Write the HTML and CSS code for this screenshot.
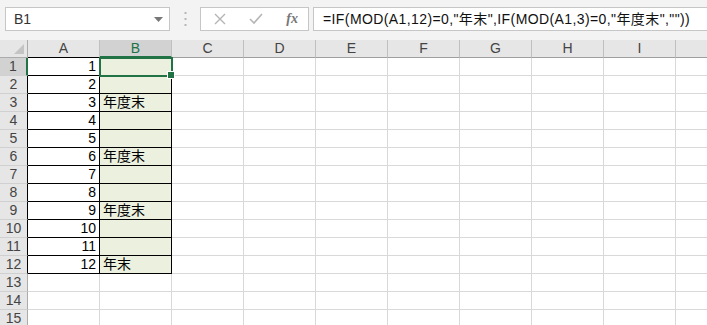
FILE: index.html
```html
<!DOCTYPE html>
<html>
<head>
    <meta charset="utf-8">
    <title>Excel</title>
    <link rel="stylesheet" href="styles.css">
</head>
<body>
    <div class="app">
        <div class="bar">
            <div class="namebox">
                <span class="name">B1</span>
                <svg class="drop" width="9" height="5" viewBox="0 0 9 5"><polygon points="0,0 9,0 4.5,5" fill="#777"/></svg>
            </div>
            <div class="sep">
                <svg width="3" height="14" viewBox="0 0 3 14">
                    <rect x="0.5" y="0" width="2" height="2" fill="#b8b8b8"/>
                    <rect x="0.5" y="6" width="2" height="2" fill="#b8b8b8"/>
                    <rect x="0.5" y="12" width="2" height="2" fill="#b8b8b8"/>
                </svg>
            </div>
            <div class="fnbtns">
                <svg width="12" height="12" viewBox="0 0 12 12"><path d="M1 1 L11 11 M11 1 L1 11" stroke="#b5b5b5" stroke-width="1.4" fill="none"/></svg>
                <svg width="14" height="12" viewBox="0 0 14 12"><path d="M1 6 L5 10 L13 1" stroke="#b5b5b5" stroke-width="1.6" fill="none"/></svg>
                <span class="fx">fx</span>
            </div>
            <div class="formula">=IF(MOD(A1,12)=0,"年末",IF(MOD(A1,3)=0,"年度末",""))</div>
        </div>

        <div class="sheet">
            <div class="hd corner">
                <svg width="10" height="10" viewBox="0 0 10 10"><polygon points="10,0 10,10 0,10" fill="#c4c4c4"/></svg>
            </div>
            <div class="hd col ink">A</div>
            <div class="hd col sel">B</div>
            <div class="hd col">C</div>
            <div class="hd col">D</div>
            <div class="hd col">E</div>
            <div class="hd col">F</div>
            <div class="hd col">G</div>
            <div class="hd col">H</div>
            <div class="hd col">I</div>
            <div class="hd col last"></div>

            <div class="hd row rsel">1</div>
            <div class="c num bx">1</div>
            <div class="c fill bx active"></div>
            <div class="c"></div><div class="c"></div><div class="c"></div><div class="c"></div><div class="c"></div><div class="c"></div><div class="c"></div><div class="c last"></div>

            <div class="hd row ink">2</div>
            <div class="c num bx">2</div>
            <div class="c fill bx"></div>
            <div class="c"></div><div class="c"></div><div class="c"></div><div class="c"></div><div class="c"></div><div class="c"></div><div class="c"></div><div class="c last"></div>

            <div class="hd row ink">3</div>
            <div class="c num bx">3</div>
            <div class="c fill bx">年度末</div>
            <div class="c"></div><div class="c"></div><div class="c"></div><div class="c"></div><div class="c"></div><div class="c"></div><div class="c"></div><div class="c last"></div>

            <div class="hd row ink">4</div>
            <div class="c num bx">4</div>
            <div class="c fill bx"></div>
            <div class="c"></div><div class="c"></div><div class="c"></div><div class="c"></div><div class="c"></div><div class="c"></div><div class="c"></div><div class="c last"></div>

            <div class="hd row ink">5</div>
            <div class="c num bx">5</div>
            <div class="c fill bx"></div>
            <div class="c"></div><div class="c"></div><div class="c"></div><div class="c"></div><div class="c"></div><div class="c"></div><div class="c"></div><div class="c last"></div>

            <div class="hd row ink">6</div>
            <div class="c num bx">6</div>
            <div class="c fill bx">年度末</div>
            <div class="c"></div><div class="c"></div><div class="c"></div><div class="c"></div><div class="c"></div><div class="c"></div><div class="c"></div><div class="c last"></div>

            <div class="hd row ink">7</div>
            <div class="c num bx">7</div>
            <div class="c fill bx"></div>
            <div class="c"></div><div class="c"></div><div class="c"></div><div class="c"></div><div class="c"></div><div class="c"></div><div class="c"></div><div class="c last"></div>

            <div class="hd row ink">8</div>
            <div class="c num bx">8</div>
            <div class="c fill bx"></div>
            <div class="c"></div><div class="c"></div><div class="c"></div><div class="c"></div><div class="c"></div><div class="c"></div><div class="c"></div><div class="c last"></div>

            <div class="hd row ink">9</div>
            <div class="c num bx">9</div>
            <div class="c fill bx">年度末</div>
            <div class="c"></div><div class="c"></div><div class="c"></div><div class="c"></div><div class="c"></div><div class="c"></div><div class="c"></div><div class="c last"></div>

            <div class="hd row ink">10</div>
            <div class="c num bx">10</div>
            <div class="c fill bx"></div>
            <div class="c"></div><div class="c"></div><div class="c"></div><div class="c"></div><div class="c"></div><div class="c"></div><div class="c"></div><div class="c last"></div>

            <div class="hd row ink">11</div>
            <div class="c num bx">11</div>
            <div class="c fill bx"></div>
            <div class="c"></div><div class="c"></div><div class="c"></div><div class="c"></div><div class="c"></div><div class="c"></div><div class="c"></div><div class="c last"></div>

            <div class="hd row ink">12</div>
            <div class="c num bx">12</div>
            <div class="c fill bx">年末</div>
            <div class="c"></div><div class="c"></div><div class="c"></div><div class="c"></div><div class="c"></div><div class="c"></div><div class="c"></div><div class="c last"></div>

            <div class="hd row">13</div>
            <div class="c"></div><div class="c"></div>
            <div class="c"></div><div class="c"></div><div class="c"></div><div class="c"></div><div class="c"></div><div class="c"></div><div class="c"></div><div class="c last"></div>

            <div class="hd row">14</div>
            <div class="c"></div><div class="c"></div>
            <div class="c"></div><div class="c"></div><div class="c"></div><div class="c"></div><div class="c"></div><div class="c"></div><div class="c"></div><div class="c last"></div>

            <div class="hd row">15</div>
            <div class="c"></div><div class="c"></div>
            <div class="c"></div><div class="c"></div><div class="c"></div><div class="c"></div><div class="c"></div><div class="c"></div><div class="c"></div><div class="c last"></div>
        </div>
    </div>
</body>
</html>
```

FILE: styles.css
```css
* {
    margin: 0;
    padding: 0;
    box-sizing: border-box;
}
body {
    width: 707px;
    height: 325px;
    overflow: hidden;
    background: #fff;
    font-family: "Liberation Sans", "Noto Sans CJK JP", sans-serif;
    color: #000;
}
.app {
    display: flex;
    flex-direction: column;
    height: 325px;
    overflow: hidden;
}
.bar {
    height: 40px;
    flex-shrink: 0;
    display: flex;
    align-items: flex-start;
    padding: 7px 0 0 5px;
    background: #f3f3f3;
}
.namebox {
    width: 165px;
    height: 24px;
    display: flex;
    align-items: center;
    justify-content: space-between;
    padding: 0 6px 0 8px;
    background: #fff;
    border: 1px solid #c6c6c6;
}
.name {
    font-size: 14px;
    color: #333;
}
.drop {
    margin-top: 1px;
}
.sep {
    width: 30px;
    height: 24px;
    display: flex;
    align-items: center;
    justify-content: center;
}
.fnbtns {
    width: 109px;
    height: 24px;
    display: flex;
    align-items: center;
    justify-content: space-between;
    padding: 0 10px 0 13px;
    background: #fff;
    border: 1px solid #c6c6c6;
}
.fx {
    font-family: "Liberation Serif", serif;
    font-style: italic;
    font-weight: bold;
    font-size: 14px;
    color: #777;
}
.formula {
    flex: 1;
    height: 24px;
    margin-left: 4px;
    padding-left: 9px;
    background: #fff;
    border: 1px solid #c6c6c6;
    border-right: none;
    font-size: 14px;
    line-height: 22px;
    letter-spacing: 0.4px;
    white-space: nowrap;
    overflow: hidden;
    color: #111;
}
.sheet {
    display: grid;
    grid-template-columns: 28px repeat(9, 72px) 1fr;
    grid-auto-rows: 18px;
}
.hd {
    background: #e6e6e6;
    color: #444;
    font-size: 14px;
    line-height: 17px;
    text-align: center;
}
.corner {
    display: flex;
    align-items: flex-end;
    justify-content: flex-end;
    padding: 0 3px 3px 0;
    border-right: 1px solid #ababab;
    border-bottom: 1px solid #ababab;
}
.col {
    border-right: 1px solid #c0c0c0;
    border-bottom: 1px solid #9f9f9f;
}
.col.ink {
    border-bottom-color: #000;
}
.col.sel {
    background: #d2d2d2;
    color: #217346;
    border-bottom: 2px solid #217346;
}
.row {
    border-right: 1px solid #ababab;
    border-bottom: 1px solid #d0d0d0;
}
.row.ink {
    border-right-color: #000;
}
.row.rsel {
    background: #d2d2d2;
    color: #444;
    border-right: 2px solid #217346;
}
.c {
    border-right: 1px solid #d9d9d9;
    border-bottom: 1px solid #d9d9d9;
    font-size: 14px;
    line-height: 17px;
    padding: 0 3px;
    white-space: nowrap;
}
.last {
    border-right: none;
}
.num {
    text-align: right;
}
.fill {
    background: #ebf1de;
}
.bx {
    border-right-color: #000;
    border-bottom-color: #000;
}
.active {
    position: relative;
    outline: 2px solid #217346;
    outline-offset: -1px;
}
.active::after {
    content: "";
    position: absolute;
    right: -4px;
    bottom: -4px;
    width: 6px;
    height: 6px;
    background: #217346;
    border: 1px solid #fff;
}
```
